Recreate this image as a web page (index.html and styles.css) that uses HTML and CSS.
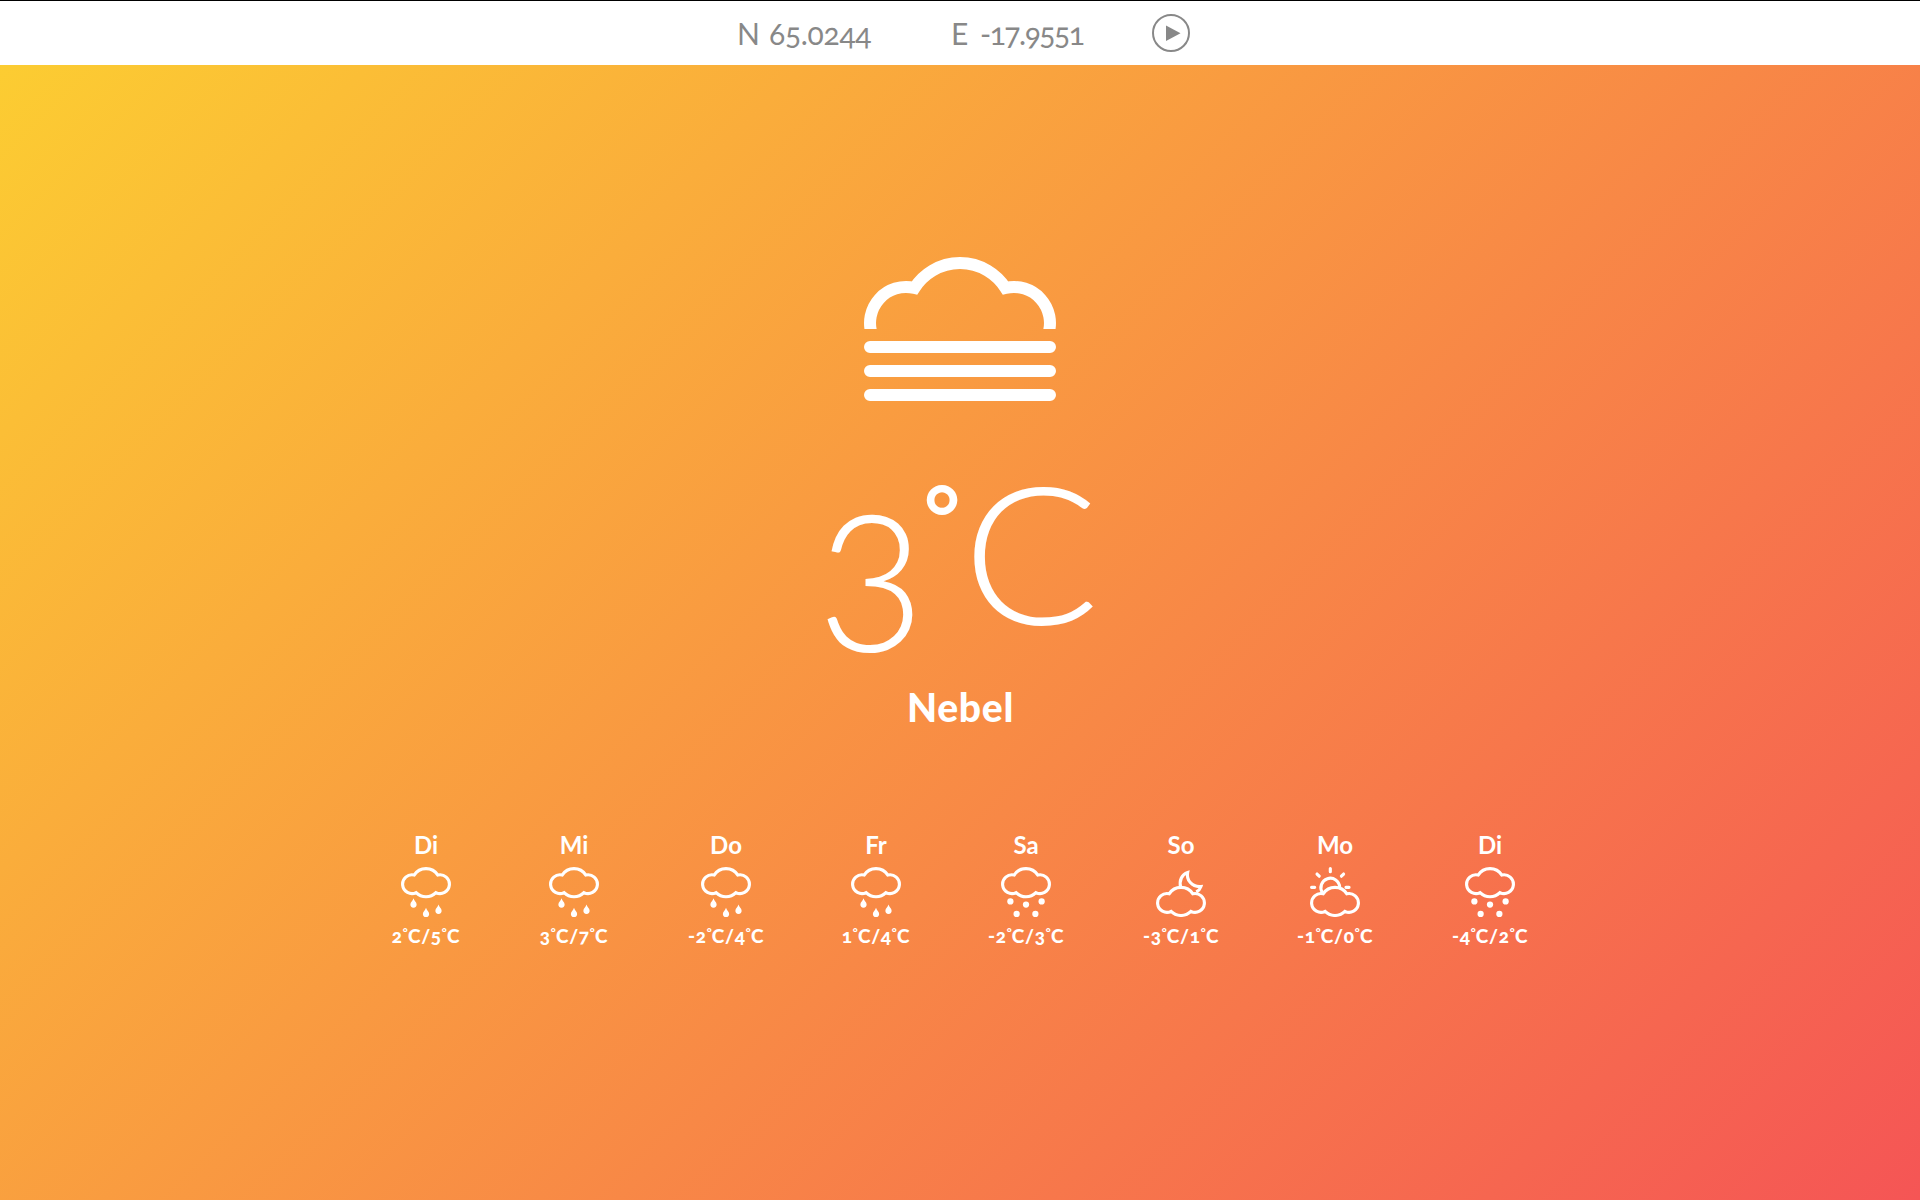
FILE: index.html
```
<!DOCTYPE html>
<html lang="de">
<head>
<meta charset="utf-8">
<title>Wetter</title>
<link rel="stylesheet" href="styles.css">
</head>
<body>
<svg class="defs" aria-hidden="true">
  <defs>
    <clipPath id="above-fog"><rect width="64" height="24"/></clipPath>
    <path id="cloud" d="M16.82 10.33A18 18 0 0 1 47.18 10.33A12 12 0 1 1 44.69 32.8A18 18 0 0 1 19.31 32.8A12 12 0 1 1 16.82 10.33Z"/>
    <path id="drop" d="M0 0C.8 3 4 5 4 8a4 4 0 0 1-8 0C-4 5-.8 3 0 0Z"/>
    <symbol id="rain" viewBox="0 0 64 64">
      <use href="#cloud" class="line"/>
      <g class="fill"><use href="#drop" x="16" y="40"/><use href="#drop" x="32" y="52"/><use href="#drop" x="48" y="48"/></g>
    </symbol>
    <symbol id="snow" viewBox="0 0 64 64">
      <use href="#cloud" class="line"/>
      <g class="fill"><circle cx="12" cy="44" r="4"/><circle cx="32" cy="48" r="4"/><circle cx="52" cy="44" r="4"/><circle cx="20" cy="60" r="4"/><circle cx="44" cy="60" r="4"/></g>
    </symbol>
    <symbol id="moon" viewBox="0 0 64 64">
      <use href="#cloud" y="24" class="line"/>
      <path class="line" d="M31.5 26C29.5 17 33 9.500 40.500 7C38.500 16.500 46 26 57.500 25C56.500 28 54.500 30.500 51.500 32"/>
    </symbol>
    <symbol id="sun" viewBox="0 0 64 64">
      <use href="#cloud" y="24" class="line"/>
      <path class="line" d="M16 33A12 12 0 1 1 38 26"/>
      <path class="line round" d="M26 2V6M2 26H6M46 26H50M9 9L11.800 11.800M43 9L40.200 11.800"/>
    </symbol>
  </defs>
</svg>
<header class="bar">
  <div class="coord north"><span class="axis">N</span><span class="value">65.0244</span></div>
  <div class="coord east"><span class="axis">E</span><span class="value">-17.9551</span></div>
  <button class="go" aria-label="Start"><svg viewBox="0 0 38 38"><circle cx="19" cy="19" r="18"/><path d="M14 11.500V27L28.500 19.300Z"/></svg></button>
</header>
<main>
  <section class="now">
    <svg class="fog" viewBox="0 0 64 48">
      <path class="line" clip-path="url(#above-fog)" d="M2.700 26A12 12 0 0 1 16.820 10.330A18 18 0 0 1 47.180 10.330A12 12 0 0 1 61.300 26"/>
      <path class="line round" d="M2 30H62M2 38H62M2 46H62"/>
    </svg>
    <div class="temp"><span class="num">3</span><span class="ring">°</span><span class="unit">C</span></div>
    <h1>Nebel</h1>
  </section>
  <section class="week">
    <div class="day"><h2>Di</h2><svg><use href="#rain"/></svg><p>2<i>°</i>C/5<i>°</i>C</p></div>
    <div class="day"><h2>Mi</h2><svg><use href="#rain"/></svg><p>3<i>°</i>C/7<i>°</i>C</p></div>
    <div class="day"><h2>Do</h2><svg><use href="#rain"/></svg><p>-2<i>°</i>C/4<i>°</i>C</p></div>
    <div class="day"><h2>Fr</h2><svg><use href="#rain"/></svg><p>1<i>°</i>C/4<i>°</i>C</p></div>
    <div class="day"><h2>Sa</h2><svg><use href="#snow"/></svg><p>-2<i>°</i>C/3<i>°</i>C</p></div>
    <div class="day"><h2>So</h2><svg><use href="#moon"/></svg><p>-3<i>°</i>C/1<i>°</i>C</p></div>
    <div class="day"><h2>Mo</h2><svg><use href="#sun"/></svg><p>-1<i>°</i>C/0<i>°</i>C</p></div>
    <div class="day"><h2>Di</h2><svg><use href="#snow"/></svg><p>-4<i>°</i>C/2<i>°</i>C</p></div>
  </section>
</main>
</body>
</html>
```
FILE: styles.css
```
* { box-sizing: border-box; margin: 0; padding: 0; }
body {
  height: 1200px;
  overflow: hidden;
  display: flex;
  flex-direction: column;
  font-family: Lato, "Open Sans", sans-serif;
  font-variant-numeric: oldstyle-nums;
  color: #fff;
  background: linear-gradient(135deg, #fccf31 0%, #f55555 100%);
}
.defs { position: absolute; width: 0; height: 0; }
.line { fill: none; stroke: #fff; stroke-width: 4; stroke-miterlimit: 10; }
.round { stroke-linecap: round; }
.fill { fill: #fff; }
.bar {
  height: 65px;
  border-top: 1px solid #000;
  background: #fff;
  color: #888;
  display: flex;
  align-items: center;
  padding-left: 737px;
  font-size: 30px;
  line-height: 40px;
}
.coord { display: flex; }
.north { width: 214px; letter-spacing: -0.3px; }
.north .axis { width: 32px; }
.east { width: 201px; letter-spacing: -1.5px; }
.east .axis { width: 29px; }
.go { border: 0; background: none; width: 38px; height: 38px; }
.go svg { display: block; width: 38px; height: 38px; }
.go circle { fill: none; stroke: #888; stroke-width: 2; }
.go path { fill: #888; }
.now { display: flex; flex-direction: column; align-items: center; padding-top: 192px; }
.fog { width: 192px; height: 144px; }
.temp {
  display: flex;
  align-items: baseline;
  justify-content: center;
  padding-left: 6px;
  height: 243px;
  margin-top: 36px;
  line-height: 225px;
  font-weight: 300;
}
.temp span { display: flex; justify-content: center; }
.num { width: 100px; font-size: 212px; transform: scaleX(0.96); }
.ring { width: 42px; font-size: 88px; font-weight: 700; transform: translateY(-81px); }
.unit { width: 142px; font-size: 191px; transform: translate(-3px, -7px) scaleX(1.06); }
h1 { font-size: 39px; line-height: 44px; margin-top: 5px; font-weight: 900; letter-spacing: 0.7px; padding-left: 1px; }
.week {
  display: grid;
  grid-template-columns: 147px 149px 155px 145px 155px 155px 153px 157px;
  justify-content: center;
  margin-top: 102px;
}
.day { display: flex; flex-direction: column; align-items: center; }
h2 { font-size: 24px; line-height: 28px; margin-bottom: 8px; padding-left: 1px; }
.day svg { width: 50px; height: 50px; }
.day p { font-size: 19px; line-height: 22px; margin-top: 8px; font-weight: 900; white-space: nowrap; letter-spacing: 0.7px; padding-left: 1px; }
.day i { font-style: normal; font-size: 12px; line-height: 1px; vertical-align: 6px; letter-spacing: 0.2px; }
```
